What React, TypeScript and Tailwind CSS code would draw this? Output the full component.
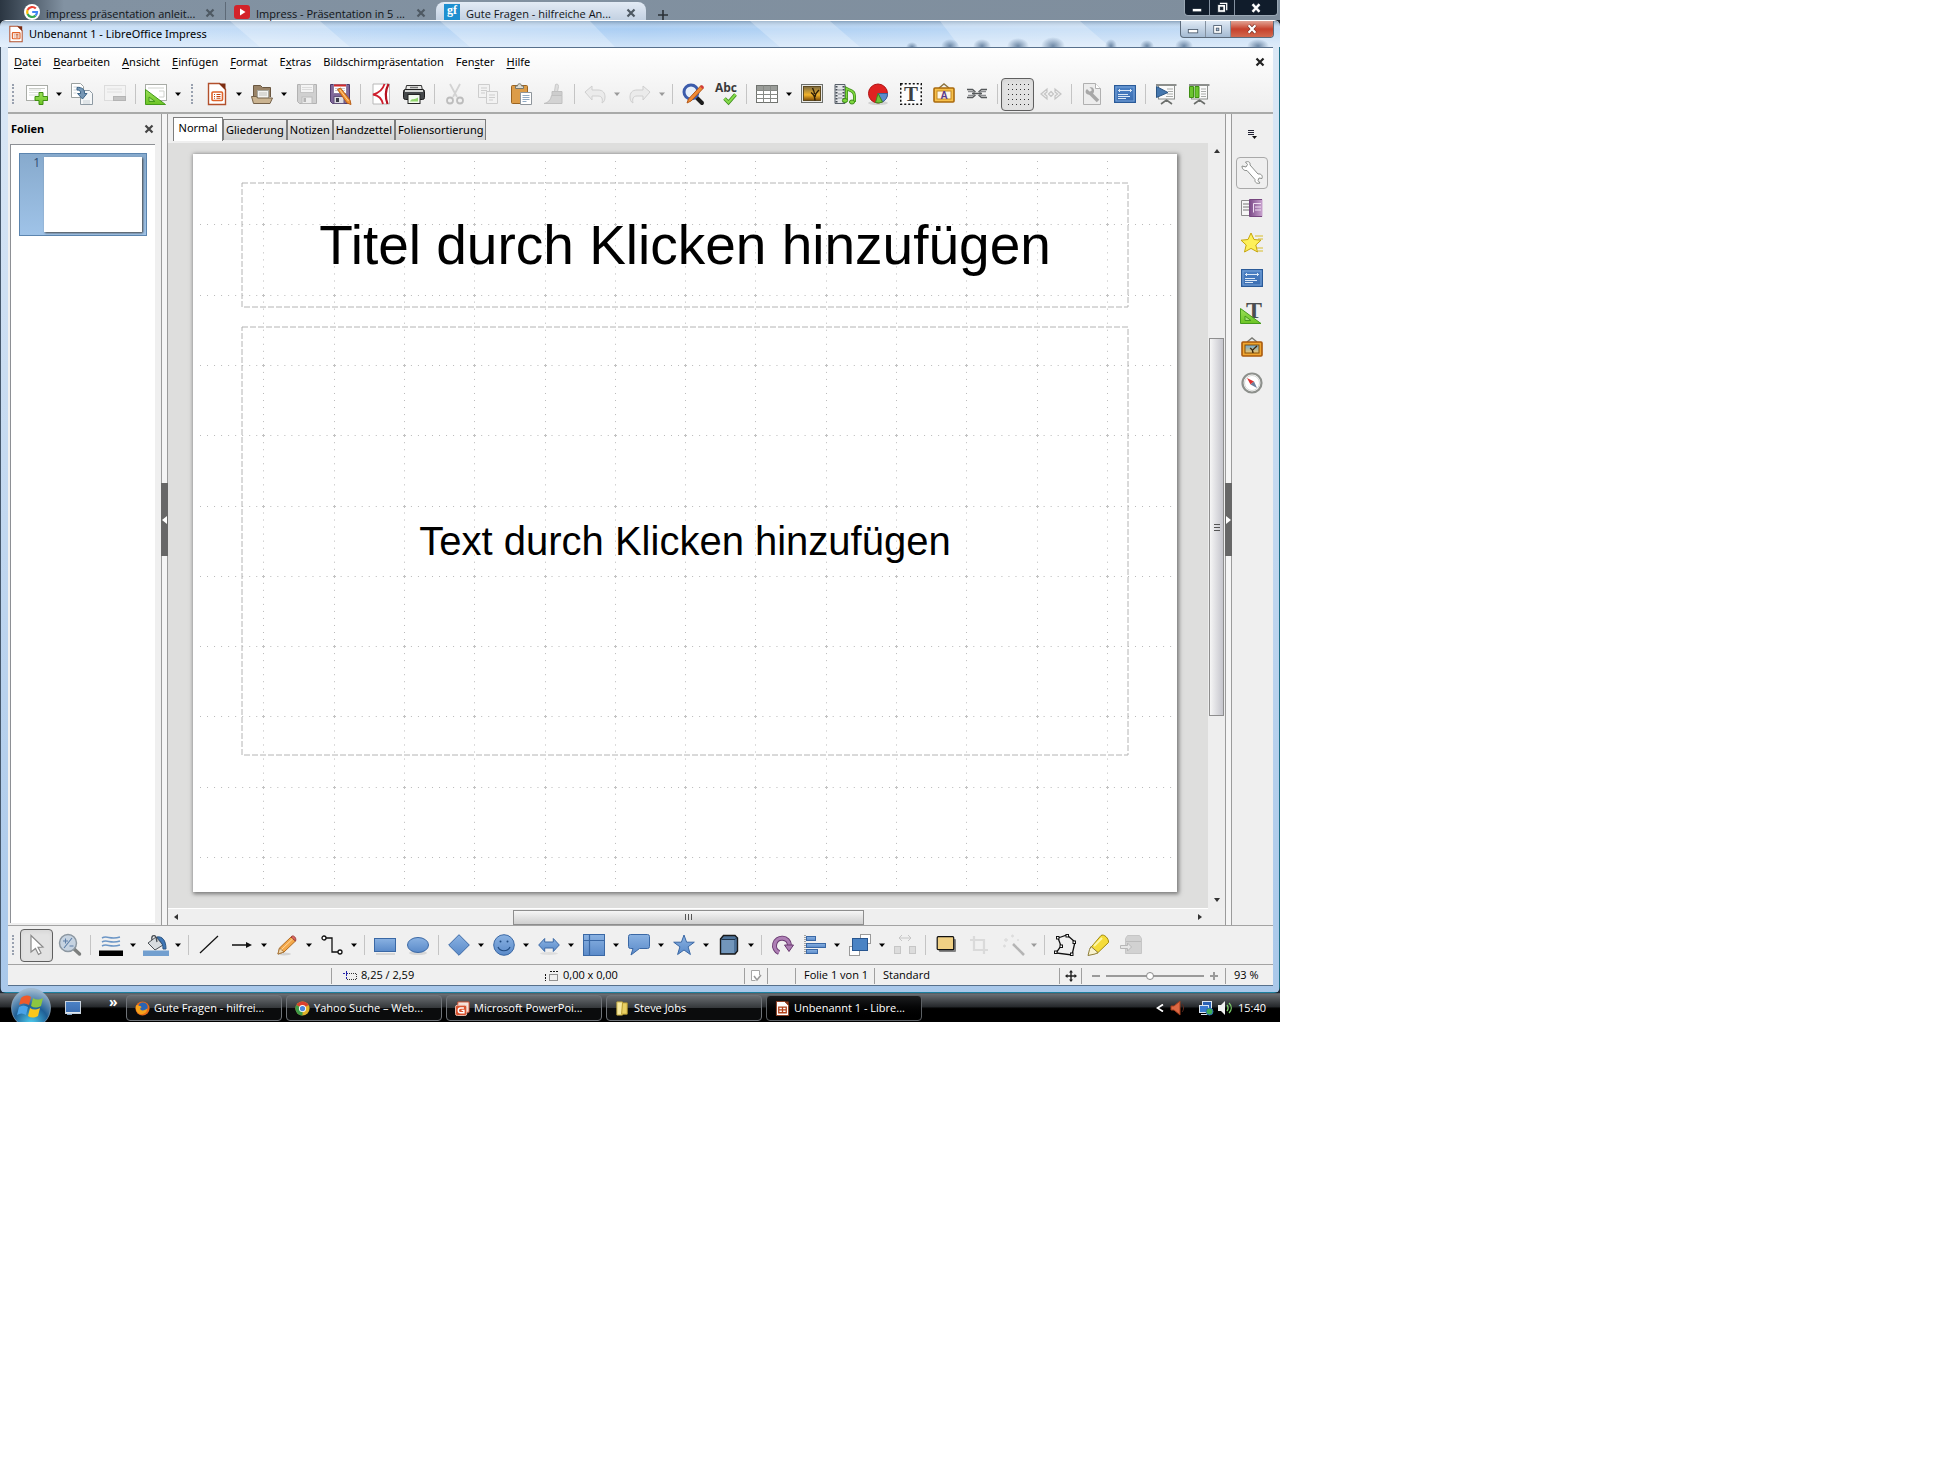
import type { ReactNode } from 'react';
import { clsx } from 'clsx';

interface ToolItem {
  icon: string;
  label: string;
  drop?: boolean;
  pressed?: boolean;
  disabled?: boolean;
}

type ToolEntry = ToolItem | 'sep' | 'grip';

const BLUE = 'url(#g-blue)';
const EDGE = '#3a68a5';

const docLines = (
  <path d="M3 7h12M3 9.500h12M3 12h9" stroke="#d8dcd6" strokeWidth="1" />
);

const icons: Record<string, ReactNode> = {
  newSlide: (
    <>
      <rect x="0.500" y="2.500" width="21" height="15" fill="#fff" stroke="#a9aca7" />
      {docLines}
      <path d="M3 5.500h16" stroke="#c9ccc7" />
      <path d="M13 9.500h4v4h4.500v4H17v4h-4v-4H9v-4h4z" fill="url(#g-green)" stroke="#3f8f12" />
    </>
  ),
  duplicate: (
    <>
      <path d="M0.500 0.500h9l3 3v11h-12z" fill="#fff" stroke="#9ba1a0" />
      <path d="M2.500 4h6M2.500 7h4M2.500 10h3" stroke="#c9d1d6" />
      <path d="M9.500 7.500h9l3 3v11h-12z" fill="#f5f7f8" stroke="#8e9aa3" />
      <path d="M12 18h7M12 20h7" stroke="#c9d1d6" />
      <path d="M6 4.500c5-.5 8 2 7.500 6h2.500L11.500 16 6.500 10.500h3c.5-2.500-1-3.500-3.500-3.500z" fill="#7697b5" stroke="#3e6688" />
    </>
  ),
  deleteSlide: (
    <>
      <rect x="0.500" y="2.500" width="21" height="15" fill="#f3f3f3" stroke="#dcdcdc" />
      <path d="M3 6h15M3 9h15" stroke="#e0e0e0" />
      <rect x="9.500" y="13.500" width="12" height="4" fill="#c4c4c4" stroke="#b4b4b4" />
    </>
  ),
  template: (
    <>
      <rect x="0.500" y="1.500" width="21" height="16" fill="#fff" stroke="#a9aca7" />
      <path d="M3 5h16M14 8h5v6h-5" stroke="#d0d3ce" fill="none" />
      <path d="M0.500 6.500v15h20z" fill="url(#g-green)" stroke="#459a1c" />
      <path d="M4 14v4.500h6z" fill="#a9e07c" stroke="#459a1c" />
    </>
  ),
  impress: (
    <>
      <path d="M2.500 0.500h11l6 6v15h-17z" fill="#fff" stroke="#b2502c" strokeWidth="1.400" />
      <path d="M13 0.500h6.500V7z" fill="#7c2d12" />
      <rect x="6" y="9" width="10.500" height="8.500" rx="1" fill="#fff" stroke="#e0632a" strokeWidth="1.600" />
      <path d="M8 11.500h1M10.500 11.500h4M8 13.500h1M10.500 13.500h4M8 15.300h1M10.500 15.300h4" stroke="#c1440e" strokeWidth="1.100" />
    </>
  ),
  open: (
    <>
      <path d="M2.500 19V2.500h7l2 2h8V14" fill="#9a8468" stroke="#6a5740" />
      <rect x="6.500" y="7.500" width="11" height="8" fill="#f4f4f2" stroke="#a8a8a0" />
      <path d="M8 10h8M8 12h8" stroke="#c0c0bb" />
      <path d="M0.500 13.500h5l1 1.500h15l-2.500 5.500H2.500z" fill="#cbb491" stroke="#75624a" />
    </>
  ),
  save: (
    <>
      <path d="M1.500 1.500h19v19h-17l-2-2z" fill="#d0d0d0" stroke="#b2b2b2" />
      <rect x="4.500" y="1.500" width="13" height="8" fill="#f4f4f4" stroke="#c4c4c4" />
      <path d="M6 4.500h10M6 6.500h10" stroke="#dcdcdc" />
      <rect x="6" y="14" width="10" height="6.500" fill="#ededed" stroke="#bcbcbc" />
      <rect x="7.500" y="15" width="2.500" height="4" fill="#b4b4b4" />
    </>
  ),
  saveAs: (
    <>
      <path d="M1.500 1.500h19v19h-17l-2-2z" fill="#80689a" stroke="#503a6b" />
      <rect x="4.500" y="1.500" width="13" height="9" fill="#fff" stroke="#8b7aa0" />
      <path d="M5 2.500h12" stroke="#d42c2c" strokeWidth="2" />
      <path d="M6 5.500h10M6 7.500h10" stroke="#c8c8d0" />
      <rect x="5" y="13.500" width="10" height="7" fill="#dcdce2" stroke="#64527b" />
      <rect x="7" y="15" width="3" height="4" fill="#3e3e4a" />
      <path d="M8.500 6.500l3-1.500 9.500 12 1 4.500-4-1.500z" fill="#f29433" stroke="#b9601a" />
      <path d="M11 7l8.500 11" stroke="#ffd090" />
    </>
  ),
  pdf: (
    <>
      <path d="M3 1h16.500v20H3z" fill="#fff" stroke="#b8b8b8" />
      <path d="M14.500 1C13 6 9 10 3 11.500c6 1 9 5 10 9.500" fill="none" stroke="#cf1f2e" strokeWidth="1.800" />
      <path d="M18.500 1c-3.500 7-3.500 13-1 20" fill="none" stroke="#b7121f" strokeWidth="2.200" />
    </>
  ),
  print: (
    <>
      <path d="M3.500 2.500h15l1 5h-17z" fill="#e8e8e6" stroke="#333" />
      <path d="M7 4.500h8" stroke="#777" strokeWidth="1.500" />
      <rect x="0.500" y="6.500" width="21" height="10" rx="2" fill="#45484a" stroke="#1b1b1b" />
      <path d="M2 8h18" stroke="#d5d7d4" strokeWidth="2" />
      <rect x="5" y="11.500" width="12" height="9" fill="#f4fbf0" stroke="#222" />
      <path d="M7 18.500c2-4 4-1 8-4v4z" fill="#8fd66a" />
    </>
  ),
  cut: (
    <g stroke="#bdbdbd" fill="none">
      <path d="M6 1l7 13M16 1L9 14" strokeWidth="1.800" stroke="#d3d3d3" />
      <circle cx="6" cy="17.500" r="3" strokeWidth="1.800" />
      <circle cx="16" cy="17.500" r="3" strokeWidth="1.800" />
    </g>
  ),
  copy: (
    <g fill="#f2f2f2" stroke="#cdcdcd">
      <path d="M1.500 1.500h11v13h-11z" />
      <path d="M9.500 8.500h11v12h-11z" />
      <path d="M4 5h6M4 7.500h6M4 10h4M12 12h6M12 14.500h6M12 17h4" />
    </g>
  ),
  paste: (
    <>
      <rect x="1.500" y="2.500" width="16" height="18" rx="1" fill="#dc9c48" stroke="#9b6420" />
      <path d="M5.500 5.500V3h2c0-3 4-3 4 0h2v2.500z" fill="#dcdcd4" stroke="#77776c" />
      <path d="M10.500 9.500h11v12h-11z" fill="#fff" stroke="#8e959b" />
      <path d="M12.500 12.500h7M12.500 14.500h7M12.500 16.500h7M12.500 18.500h4" stroke="#8fa9c4" />
    </>
  ),
  brush: (
    <>
      <path d="M12.500 1.500c2-1 3 0 3 2l-1 5h-3z" fill="#dedede" stroke="#c9c9c9" />
      <path d="M9 8.500h10v4H9z" fill="#cdcdcd" stroke="#c0c0c0" />
      <path d="M8.500 12.500h10.500v8H1c4-1 6.500-3 7.500-8z" fill="#d3d3d3" stroke="#c0c0c0" />
    </>
  ),
  undo: (
    <path d="M1 8l7-6v4h6c5 0 7 3 7 7 0 3-1 5-3 6 1-4 0-7-4-7H8v4z" transform="translate(0 1)" fill="#ebebeb" stroke="#cfcfcf" />
  ),
  redo: (
    <path d="M21 8l-7-6v4H8c-5 0-7 3-7 7 0 3 1 5 3 6-1-4 0-7 4-7h6v4z" transform="translate(0 1)" fill="#ebebeb" stroke="#cfcfcf" />
  ),
  find: (
    <>
      <path d="M13 13l7 7" stroke="#1d1d1d" strokeWidth="4" strokeLinecap="round" />
      <circle cx="9" cy="9" r="7" fill="#e6effa" stroke="#3c5cab" strokeWidth="3" />
      <path d="M19 2.500l2.500 2.500L9 18l-4 2 1.500-4z" fill="#f08a34" stroke="#b3591a" />
      <path d="M18 3.500l2.500 2.500 1.500-2-2-2z" fill="#d43c3c" />
    </>
  ),
  spell: (
    <>
      <text x="11" y="9" textAnchor="middle" fontFamily="Open Sans, sans-serif" fontWeight="700" fontSize="12" fill="#3a3a3a">
        Abc
      </text>
      <path d="M9.500 15.500l4 4 7-8" fill="none" stroke="#3f8f1c" strokeWidth="3.600" />
      <path d="M9.500 15.500l4 4 7-8" fill="none" stroke="#86db4c" strokeWidth="2" />
    </>
  ),
  table: (
    <>
      <rect x="0.500" y="2.500" width="21" height="17" fill="#fff" stroke="#70736f" />
      <path d="M1 3h20v4H1z" fill="#9a9d99" />
      <path d="M0.500 7.500h21M0.500 11.500h21M0.500 15.500h21M7.500 2.500v17M14.500 2.500v17" stroke="#878a86" />
    </>
  ),
  image: (
    <>
      <rect x="0.500" y="1.500" width="21" height="18" fill="#e9e9e7" stroke="#6c6f6b" />
      <rect x="2.500" y="3.500" width="17" height="14" fill="url(#g-sun)" stroke="#5f4a20" />
      <path d="M14 17.500c0-4-1-6-4-8M14 14c0-4 2-5 4-7M13.500 11c0-2-1-4-2-6" fill="none" stroke="#2b1d08" strokeWidth="1.400" />
    </>
  ),
  media: (
    <>
      <path d="M1 1.500h10v19H1z" fill="#e3e5e8" stroke="#59616a" />
      <path d="M2.500 3v17M9.500 3v17" stroke="#444c55" strokeWidth="2" strokeDasharray="1.500 1.500" />
      <path d="M4 7h4M4 11h4M4 15h4" stroke="#8b9097" />
      <path d="M12.500 17V5.500l3 1.500c3 1 5 3 5 6v6" fill="none" stroke="#3d8d17" strokeWidth="3" />
      <path d="M12.500 17V5.500l3 1.500c3 1 5 3 5 6v6" fill="none" stroke="#7ed63f" strokeWidth="1.500" />
      <ellipse cx="11" cy="17.500" rx="2.600" ry="2" fill="#7ed63f" stroke="#3d8d17" />
      <ellipse cx="18" cy="19" rx="2.600" ry="2" fill="#7ed63f" stroke="#3d8d17" />
    </>
  ),
  chart: (
    <>
      <ellipse cx="11" cy="20" rx="10" ry="2" fill="#000" opacity="0.120" />
      <circle cx="11" cy="10.500" r="9.500" fill="#e02222" stroke="#b01212" />
      <path d="M11 10.500h9.500a9.500 9.500 0 0 1-5 8.500z" fill="#5b8ccb" stroke="#37629c" />
      <path d="M11 10.500l4.500 8.500a9.500 9.500 0 0 1-7 .500z" fill="#72c23a" stroke="#3f8a1c" />
    </>
  ),
  textbox: (
    <>
      <rect x="0.750" y="0.750" width="20.500" height="20.500" fill="#fdfdfd" stroke="#111" strokeWidth="1.500" strokeDasharray="2 2" />
      <text x="11" y="18" textAnchor="middle" fontFamily="Liberation Serif, serif" fontWeight="700" fontSize="21" fill="#3d3f40">
        T
      </text>
    </>
  ),
  fontwork: (
    <>
      <path d="M6 5l5-4 5 4" fill="none" stroke="#8c7440" strokeWidth="1.400" />
      <rect x="1" y="5" width="20" height="14" rx="1" fill="#f7c04a" stroke="#a9690d" strokeWidth="1.600" />
      <rect x="4" y="8" width="14" height="8" fill="#fdf6e6" stroke="#c48a24" />
      <text x="11" y="15.500" textAnchor="middle" fontFamily="Liberation Sans, sans-serif" fontWeight="700" fontSize="10" fill="#5b3a8a">
        A
      </text>
    </>
  ),
  link: (
    <g fill="none" stroke="#55585a" strokeWidth="1.400">
      <path d="M1 6.500h5.500l3 2.500M21 6.500h-5.500l-3 2.500M1 14.500h5.500l3-2.500M21 14.500h-5.500l-3-2.500" />
      <path d="M2 8.500h4c3 0 3 4 0 4H2M20 8.500h-4c-3 0-3 4 0 4h4" stroke="#8b8d90" />
      <path d="M6 10.500h10" />
    </g>
  ),
  grid: (
    <g fill="#333">
      {[1, 6, 11, 16, 21].map(y =>
        [1, 5, 9, 13, 17, 21].map(x => (
          <rect key={`${x}-${y}`} x={x} y={y} width="1" height="1" />
        ))
      )}
    </g>
  ),
  glue: (
    <g fill="#f0f0f0" stroke="#c4c4c4" strokeWidth="1.200">
      <path d="M1 11l6-5v3l-2.500 2L7 13v3zM21 11l-6-5v3l2.500 2-2.500 2v3z" />
      <path d="M11 8.500L13.500 11 11 13.500 8.500 11z" />
    </g>
  ),
  docWrench: (
    <>
      <path d="M2.500 0.500h12l5 5v16h-17z" fill="#ededed" stroke="#b0b0b0" />
      <path d="M14.500 0.500v5h5" fill="#fff" stroke="#b0b0b0" />
      <path d="M9 10l8 8" stroke="#a8a8a8" strokeWidth="3.500" />
      <path d="M6 6l2.500 2.500L10.500 8V6l-2-1.500c3-1 5 1 4.500 4s-3 4-6 3-3-4-1-5.500z" fill="#a8a8a8" />
    </>
  ),
  form: (
    <>
      <rect x="0.500" y="2.500" width="21" height="17" fill="url(#g-form)" stroke="#2a5a98" />
      <rect x="2" y="4" width="18" height="14" fill="none" stroke="#78a4d8" />
      <path d="M4 7.500h14M5.500 6v3M16.500 6v3M4 11.500h10M4 13.500h12M4 15.500h8" stroke="#dbe8f6" />
    </>
  ),
  showPlay: (
    <>
      <path d="M1 2h20.500M11.500 17v2M6 21l5.500-4 5.500 4" fill="none" stroke="#6b6e6b" strokeWidth="1.600" />
      <rect x="3.500" y="2.500" width="16" height="13.500" fill="#fafafa" stroke="#8c8f8c" />
      <path d="M12 6h6M13 8.500h5M12 11h6M11 13.500h7" stroke="#a9aca9" />
      <path d="M1.500 3.500L13 9.500 1.500 14.500z" fill="#4577ae" stroke="#2b5583" />
    </>
  ),
  showGreen: (
    <>
      <path d="M1 2h20.500M11.500 17v2M6 21l5.500-4 5.500 4" fill="none" stroke="#6b6e6b" strokeWidth="1.600" />
      <rect x="3.500" y="2.500" width="16" height="13.500" fill="#fafafa" stroke="#8c8f8c" />
      <path d="M13 6h5M13 8.500h5M13 11h5M13 13.500h5" stroke="#a9aca9" />
      <path d="M1.500 3.500h4v11h-4zM7 3.500h4v11H7z" fill="#6bc42e" stroke="#3f8f12" />
    </>
  ),
  pointer: (
    <path d="M5 1.500l12 11.500-5 .3 3 5.700-2.500 1.500-3-6-4.500 3.500z" fill="#fff" stroke="#8a8a8a" strokeWidth="1.200" />
  ),
  zoom: (
    <>
      <path d="M14 14l6.500 6" stroke="#7d7f7e" strokeWidth="3.500" strokeLinecap="round" />
      <circle cx="9" cy="9" r="8.500" fill="#c6d3e1" stroke="#8c97a1" strokeWidth="1.500" />
      <path d="M4 7h5M6.500 4.500v5M5 14L13 4M10.500 12h4" stroke="#5d7fa8" strokeWidth="1.100" />
    </>
  ),
  lineColor: (
    <>
      <path d="M2 4c5-3 8 2 18-1M2 8c5-3 8 2 18-1M2 12c5-3 8 2 18-1" fill="none" stroke="#6c96c6" strokeWidth="1.500" />
      <rect x="-1" y="16.500" width="24" height="5.500" fill="#000" />
    </>
  ),
  fillColor: (
    <>
      <path d="M3 9l8-6 7 8-8 5z" fill="#d8dcdf" stroke="#4a4f54" />
      <path d="M7 6c-1-4 2-6 4-3l1 5" fill="none" stroke="#4a4f54" strokeWidth="1.300" />
      <path d="M12 3c5-1 9 3 9 12h-3c0-4-1-6-3-8z" fill="#3f76b5" stroke="#2b5583" />
      <rect x="-2" y="16.500" width="26" height="5.500" fill="#729fcf" />
    </>
  ),
  line: <path d="M2 19L20 2" stroke="#111" strokeWidth="1.200" />,
  arrowLine: (
    <>
      <path d="M1 11h16" stroke="#111" strokeWidth="1.400" />
      <path d="M15 8l6 3-6 3z" fill="#111" />
    </>
  ),
  pencil: (
    <>
      <ellipse cx="8" cy="20" rx="7" ry="1.500" fill="#000" opacity="0.120" />
      <path d="M15 3l4.500 4L8 18l-6 2 1.500-6z" fill="#f4a84a" stroke="#b06a20" />
      <path d="M3.500 14l4.500 4-6 2z" fill="#f3dbb4" stroke="#a97a40" />
      <path d="M15 3c2-3 6 1 4.500 4z" fill="#dd6a62" stroke="#9c3b36" />
      <path d="M16.500 5L5.500 15.500" stroke="#ffd9a0" />
    </>
  ),
  connector: (
    <g fill="#fff" stroke="#111" strokeWidth="1.300">
      <path d="M5 4h6v14h6" fill="none" />
      <circle cx="3" cy="4" r="2" />
      <circle cx="19" cy="18" r="2" />
    </g>
  ),
  rect: (
    <>
      <path d="M2 19h19v2H2z" fill="#000" opacity="0.100" />
      <rect x="0.500" y="4.500" width="21" height="13" fill={BLUE} stroke={EDGE} />
    </>
  ),
  ellipse: (
    <>
      <ellipse cx="11" cy="19" rx="9" ry="2" fill="#000" opacity="0.100" />
      <ellipse cx="11" cy="11" rx="10.500" ry="7.500" fill={BLUE} stroke={EDGE} />
    </>
  ),
  diamond: <path d="M11 0.700L21.300 11 11 21.300 0.700 11z" fill={BLUE} stroke={EDGE} />,
  smiley: (
    <>
      <circle cx="11" cy="11" r="10.300" fill={BLUE} stroke={EDGE} />
      <circle cx="7.500" cy="7.500" r="1" fill="#1f4a80" />
      <circle cx="14.500" cy="7.500" r="1" fill="#1f4a80" />
      <path d="M5 13c2 5 10 5 12 0" fill="none" stroke="#1f4a80" strokeWidth="1.200" />
    </>
  ),
  doubleArrow: (
    <>
      <ellipse cx="11" cy="19.500" rx="9" ry="1.500" fill="#000" opacity="0.080" />
      <path d="M0.700 11l6-6.500V8h8.600V4.500l6 6.500-6 6.500V14H6.700v3.500z" fill={BLUE} stroke={EDGE} />
    </>
  ),
  flowchart: (
    <>
      <rect x="0.500" y="0.500" width="21" height="21" fill={BLUE} stroke={EDGE} />
      <path d="M6.500 0.500v21M0.500 6.500h21" stroke={EDGE} strokeWidth="1.200" />
    </>
  ),
  callout: (
    <path d="M2.500 0.500h17q2 0 2 2v10q0 2-2 2h-8L3 21l2-6.500H2.500q-2 0-2-2v-10q0-2 2-2z" fill={BLUE} stroke={EDGE} />
  ),
  star: (
    <path d="M11 1l2.600 7.200h7.700l-6.200 4.600 2.300 7.700L11 16l-6.400 4.500 2.300-7.700L0.700 8.200h7.700z" fill={BLUE} stroke={EDGE} />
  ),
  cube: (
    <>
      <path d="M2.500 5l3-3.500H17L19.500 4v13L17 20H2.500z" fill="#4d7299" stroke="#1a1a1a" strokeWidth="1.400" />
      <rect x="3.500" y="6" width="12.500" height="13" fill="#7296bb" />
      <path d="M3.500 5.500H17l2.500-2.500" stroke="#20354d" fill="none" />
    </>
  ),
  rotate: (
    <>
      <path d="M8 18.500a7.500 7.500 0 1 1 10.500-7.500" fill="none" stroke="#68386f" strokeWidth="5" />
      <path d="M8 18.500a7.500 7.500 0 1 1 10.500-7.500" fill="none" stroke="#ad7fb4" strokeWidth="3.200" />
      <path d="M13.500 11h9l-4.500 6.500z" fill="#ad7fb4" stroke="#68386f" />
    </>
  ),
  align: (
    <g fill={BLUE} stroke={EDGE}>
      <path d="M1 1v19" stroke="#555" strokeDasharray="1 1" />
      <rect x="2.500" y="2.500" width="9" height="4" />
      <rect x="2.500" y="9.500" width="19" height="4" />
      <rect x="2.500" y="15.500" width="11" height="4" />
    </g>
  ),
  arrange: (
    <>
      <rect x="11.500" y="0.500" width="10" height="9" fill="#fff" stroke="#9a9a9a" />
      <rect x="0.500" y="12.500" width="10" height="9" fill="#fff" stroke="#9a9a9a" />
      <rect x="3.500" y="4.500" width="15" height="12" fill="#4a83c4" stroke="#27558f" />
    </>
  ),
  distribute: (
    <g fill="#dcdcdc" stroke="#c6c6c6">
      <path d="M5 4h12M5 4l3-3M5 4l3 3M17 4l-3-3M17 4l-3 3" fill="none" />
      <rect x="0.500" y="12.500" width="6" height="7" />
      <rect x="15.500" y="12.500" width="6" height="7" />
    </g>
  ),
  shadow: (
    <>
      <rect x="4" y="5" width="17" height="13" rx="1" fill="#555" opacity="0.700" />
      <rect x="2.200" y="2.700" width="16.500" height="13" rx="1" fill="#f0d084" stroke="#111" strokeWidth="1.200" />
    </>
  ),
  crop: (
    <g fill="none" stroke="#dadada" strokeWidth="2.200">
      <path d="M6 2v14h14M2 6h14v14" />
    </g>
  ),
  wand: (
    <>
      <path d="M12 10l11 11" stroke="#b5b5b5" strokeWidth="2.500" />
      <path d="M3 6h4M5 4v4M10 2h3M11.500 0.500v3M2 12h3M16 6h2M3.500 10.500v3" stroke="#dcdcdc" strokeWidth="1.300" />
    </>
  ),
  points: (
    <>
      <path d="M4 4l9-3 8 7-3 13-16-2 5-7z" fill="none" stroke="#111" strokeWidth="1.300" />
      <g fill="#fff" stroke="#111">
        <rect x="2.500" y="2.500" width="2.500" height="2.500" />
        <rect x="12" y="0.500" width="2.500" height="2.500" />
        <rect x="19" y="7" width="2.500" height="2.500" />
        <rect x="16.500" y="19" width="2.500" height="2.500" />
        <rect x="0.500" y="17" width="2.500" height="2.500" />
        <rect x="6" y="11" width="2.500" height="2.500" />
      </g>
    </>
  ),
  gluePoint: (
    <>
      <path d="M14 1.500c3-2 8 3 7.500 7L10 19.500l-7-5z" fill="#f5dc3a" stroke="#a08a10" />
      <path d="M4 12.500l7 6-3 1.500-7 1.500 1.500-6z" fill="#f8f2cf" stroke="#8d7d3a" />
      <path d="M15 4l-8 8" stroke="#fdf6a8" strokeWidth="2" />
    </>
  ),
  exitShape: (
    <>
      <path d="M5.500 4.500l2-3h12l2 3v15h-16z" fill="#d2d2d2" stroke="#c6c6c6" />
      <path d="M6 7.500h15" stroke="#bcbcbc" />
      <path d="M0.500 11.500h7V9l4 4-4 4v-2.500h-7z" fill="#e6e6e6" stroke="#b8b8b8" />
    </>
  ),
  sideMenu: (
    <>
      <path d="M7 7.500h6M7 9.500h6M7 11.500h6" stroke="#223" />
      <path d="M11 13h5l-2.500 3z" fill="#111" />
    </>
  ),
  wrench: (
    <path
      d="M1 4.500c0 3 2 5 5 4.500l8 9c-.5 3 2 4.500 5 3.500l-2-2.500 1-2.500 3 .500c1-3-1-5-4-4.500l-8-9c.5-3-1.500-4-4.500-3l2 2.500-1.500 2.500z"
      transform="translate(0 -0.500)"
      fill="#fff"
      stroke="#8b8e8b"
    />
  ),
  transition: (
    <>
      <path d="M0.500 3.500h9v15h-9z" fill="#f6f6f6" stroke="#8c8c8c" />
      <path d="M2 7h6M2 10h6M2 13h6" stroke="#777" />
      <path d="M8.500 2.500h13v17h-13z" fill="url(#g-purple)" />
      <path d="M21 2.500H8.500v17H21" fill="none" stroke="#76467f" />
      <path d="M12.500 15.500v-9H20M14 10h6M14 13h6" fill="none" stroke="#f0e0f3" />
    </>
  ),
  animation: (
    <>
      <path d="M14 4h8M17 7h5M16 16h6M17 19h5" stroke="#d8bd2c" strokeWidth="1.200" />
      <path d="M10 1l3 6.500 7 .7-5.200 4.800L16.500 20 10 16.400 3.500 20l1.700-7L0 8.200l7-.7z" fill="#fdf05a" stroke="#c6a50c" />
    </>
  ),
  styles: (
    <>
      <text x="13" y="16" textAnchor="middle" fontFamily="Liberation Serif, serif" fontWeight="700" fontSize="24" fill="#4b4e50">
        T
      </text>
      <path d="M-0.500 6.500v15h20.500z" fill="url(#g-green)" stroke="#459a1c" />
      <path d="M4 14v4.500h6z" fill="#a9e07c" stroke="#459a1c" />
    </>
  ),
  gallery: (
    <>
      <path d="M6 5l5-4 5 4" fill="none" stroke="#7a7a74" strokeWidth="1.400" />
      <rect x="1" y="5" width="20" height="14" rx="1" fill="#f0a631" stroke="#a9590d" strokeWidth="1.600" />
      <rect x="4" y="8" width="14" height="8" fill="url(#g-sky)" stroke="#80500f" />
      <path d="M12 16c0-3-1-4-3-5M12 13c1-2 3-3 4-4" fill="none" stroke="#3b2508" strokeWidth="1.300" />
    </>
  ),
  navigator: (
    <>
      <circle cx="11" cy="11" r="9.500" fill="#fff" stroke="#8d908c" strokeWidth="2.200" />
      <circle cx="11" cy="11" r="7.500" fill="none" stroke="#d6d8d5" />
      <path d="M6 6l7 3.500-3.500 3z" fill="#dc3232" />
      <path d="M16 16l-3-6.500-3.500 3z" fill="#6c7f9c" />
    </>
  ),
};

const standardBar: ToolEntry[] = [
  { icon: 'newSlide', label: 'Neue Folie', drop: true },
  { icon: 'duplicate', label: 'Folie duplizieren' },
  { icon: 'deleteSlide', label: 'Folie löschen', disabled: true },
  'sep',
  { icon: 'template', label: 'Folienlayout', drop: true },
  'grip',
  { icon: 'impress', label: 'Neu', drop: true },
  { icon: 'open', label: 'Öffnen', drop: true },
  { icon: 'save', label: 'Speichern', disabled: true },
  { icon: 'saveAs', label: 'Speichern unter' },
  'sep',
  { icon: 'pdf', label: 'Als PDF exportieren' },
  { icon: 'print', label: 'Drucken' },
  'sep',
  { icon: 'cut', label: 'Ausschneiden', disabled: true },
  { icon: 'copy', label: 'Kopieren', disabled: true },
  { icon: 'paste', label: 'Einfügen' },
  { icon: 'brush', label: 'Format übertragen', disabled: true },
  'sep',
  { icon: 'undo', label: 'Rückgängig', drop: true, disabled: true },
  { icon: 'redo', label: 'Wiederherstellen', drop: true, disabled: true },
  'sep',
  { icon: 'find', label: 'Suchen und Ersetzen' },
  { icon: 'spell', label: 'Rechtschreibung' },
  'sep',
  { icon: 'table', label: 'Tabelle', drop: true },
  { icon: 'image', label: 'Bild' },
  { icon: 'media', label: 'Audio oder Video' },
  { icon: 'chart', label: 'Diagramm' },
  { icon: 'textbox', label: 'Textfeld' },
  { icon: 'fontwork', label: 'Fontwork' },
  { icon: 'link', label: 'Hyperlink' },
  'sep',
  { icon: 'grid', label: 'Raster anzeigen', pressed: true },
  { icon: 'glue', label: 'Fanglinien', disabled: true },
  'sep',
  { icon: 'docWrench', label: 'Master', disabled: true },
  { icon: 'form', label: 'Formular' },
  'sep',
  { icon: 'showPlay', label: 'Ab erster Folie' },
  { icon: 'showGreen', label: 'Ab aktueller Folie' },
];

const drawingBar: ToolEntry[] = [
  { icon: 'pointer', label: 'Auswahl', pressed: true },
  { icon: 'zoom', label: 'Maßstab' },
  'sep',
  { icon: 'lineColor', label: 'Linienfarbe', drop: true },
  { icon: 'fillColor', label: 'Füllfarbe', drop: true },
  'sep',
  { icon: 'line', label: 'Linie' },
  { icon: 'arrowLine', label: 'Pfeil', drop: true },
  { icon: 'pencil', label: 'Kurve', drop: true },
  { icon: 'connector', label: 'Verbinder', drop: true },
  'sep',
  { icon: 'rect', label: 'Rechteck' },
  { icon: 'ellipse', label: 'Ellipse' },
  'sep',
  { icon: 'diamond', label: 'Standardformen', drop: true },
  { icon: 'smiley', label: 'Symbolformen', drop: true },
  { icon: 'doubleArrow', label: 'Blockpfeile', drop: true },
  { icon: 'flowchart', label: 'Flussdiagramme', drop: true },
  { icon: 'callout', label: 'Legenden', drop: true },
  { icon: 'star', label: 'Sterne', drop: true },
  { icon: 'cube', label: '3D-Objekte', drop: true },
  'sep',
  { icon: 'rotate', label: 'Drehen' },
  { icon: 'align', label: 'Ausrichten', drop: true },
  { icon: 'arrange', label: 'Anordnen', drop: true },
  { icon: 'distribute', label: 'Verteilen', disabled: true },
  'sep',
  { icon: 'shadow', label: 'Schatten' },
  { icon: 'crop', label: 'Zuschneiden', disabled: true },
  { icon: 'wand', label: 'Filter', drop: true, disabled: true },
  'sep',
  { icon: 'points', label: 'Punkte bearbeiten' },
  { icon: 'gluePoint', label: 'Klebepunkte' },
  { icon: 'exitShape', label: 'Extrusion', disabled: true },
];

const sidebar: ToolItem[] = [
  { icon: 'wrench', label: 'Eigenschaften', pressed: true },
  { icon: 'transition', label: 'Folienübergang' },
  { icon: 'animation', label: 'Animation' },
  { icon: 'form', label: 'Masterfolien' },
  { icon: 'styles', label: 'Formatvorlagen' },
  { icon: 'gallery', label: 'Gallery' },
  { icon: 'navigator', label: 'Navigator' },
];

// [before, access key, after]
const menus = [
  ['', 'D', 'atei'],
  ['', 'B', 'earbeiten'],
  ['', 'A', 'nsicht'],
  ['', 'E', 'infügen'],
  ['', 'F', 'ormat'],
  ['E', 'x', 'tras'],
  ['Bildschirm', 'p', 'räsentation'],
  ['Fen', 's', 'ter'],
  ['', 'H', 'ilfe'],
];

const viewTabs = ['Normal', 'Gliederung', 'Notizen', 'Handzettel', 'Foliensortierung'];

const Glyph = ({ name, className = 'size-[22px]' }: { name: string; className?: string }) => (
  <svg viewBox="0 0 22 22" className={clsx('shrink-0 overflow-visible', className)} aria-hidden="true">
    {icons[name]}
  </svg>
);

const Caret = ({ muted }: { muted?: boolean }) => (
  <svg viewBox="0 0 6 4" className="h-1 w-1.5" aria-hidden="true">
    <path d="M0 0.500h6L3 4z" fill={muted ? '#9a9a9a' : '#000'} />
  </svg>
);

const Cross = ({ className }: { className?: string }) => (
  <svg viewBox="0 0 10 10" className={clsx('size-[10px]', className)} aria-hidden="true">
    <path d="M1.500 1.500l7 7M8.500 1.500l-7 7" stroke="currentColor" strokeWidth="2.200" />
  </svg>
);

const Toolbar = ({ items, label }: { items: ToolEntry[]; label: string }) => (
  <div role="toolbar" aria-label={label} className="flex items-center">
    <span className="ml-1 mr-[6px] h-5 w-px border-l-2 border-dotted border-gray-400" />
    {items.map((item, i) => {
      if (item === 'sep') {
        return (
          <span key={i} className="flex w-2 shrink-0 justify-center">
            <span className="h-5 w-px bg-[#c4c4c4]" />
          </span>
        );
      }
      if (item === 'grip') {
        return (
          <span key={i} className="flex w-4 shrink-0 justify-center">
            <span className="h-5 border-l-2 border-dotted border-gray-400" />
          </span>
        );
      }
      return (
        <span key={i} className="flex shrink-0 items-center">
          <button
            type="button"
            aria-label={item.label}
            disabled={item.disabled}
            className={clsx(
              'flex size-[33px] items-center justify-center rounded-sm',
              item.pressed && 'border border-[#5f5f5f] bg-[#e2e2e2] shadow-inner'
            )}
          >
            <Glyph name={item.icon} />
          </button>
          {item.drop && (
            <button
              type="button"
              aria-label={`${item.label} Optionen`}
              className="flex h-[33px] w-3 items-center justify-center"
            >
              <Caret muted={item.disabled} />
            </button>
          )}
        </span>
      );
    })}
  </div>
);

const browserTabs = [
  { title: 'impress präsentation anleit...', icon: 'google' },
  { title: 'Impress - Präsentation in 5 ...', icon: 'youtube' },
  { title: 'Gute Fragen - hilfreiche An...', icon: 'gf' },
];

const BrowserIcon = ({ name }: { name: string }) => (
  <svg viewBox="0 0 16 16" className="size-4 shrink-0" aria-hidden="true">
    {name === 'google' && (
      <>
        <circle cx="8" cy="8" r="8" fill="#fff" />
        <path d="M11.800 4.600A5 5 0 0 0 3.600 6" fill="none" stroke="#ea4335" strokeWidth="2.200" />
        <path d="M3.600 6a5 5 0 0 0 0 4" fill="none" stroke="#fbbc05" strokeWidth="2.200" />
        <path d="M3.600 10a5 5 0 0 0 8 1.600" fill="none" stroke="#34a853" strokeWidth="2.200" />
        <path d="M11.600 11.600A5 5 0 0 0 13 8H8.200" fill="none" stroke="#4285f4" strokeWidth="2.200" />
      </>
    )}
    {name === 'youtube' && (
      <>
        <rect y="1" width="16" height="14" rx="3" fill="#d3222a" />
        <path d="M6 4.500l5.500 3.500L6 11.500z" fill="#fff" />
      </>
    )}
    {name === 'gf' && (
      <>
        <rect width="16" height="16" fill="#1d8fd0" />
        <text x="8" y="10" textAnchor="middle" fontFamily="Liberation Serif, serif" fontWeight="700" fontSize="12" fill="#fff">
          gf
        </text>
      </>
    )}
  </svg>
);

const BrowserStrip = () => (
  <div className="flex h-5 items-start bg-linear-to-r from-[#2b3642] via-[#8292a2] via-5% to-[#7f8e9d] pl-4">
    {browserTabs.map((tab, i) => (
      <div
        key={tab.title}
        className={clsx(
          'mt-0.5 flex h-[18px] w-[210px] items-end pl-2 pr-2.5 text-[11px] text-[#101418]',
          i === 2 && 'rounded-t-lg bg-linear-to-b from-[#e3ebf5] to-[#c3d1e2]',
          i === 0 && 'border-r border-[#5d6977]'
        )}
      >
        <BrowserIcon name={tab.icon} />
        <span className="ml-1.5 flex-1 whitespace-nowrap leading-3">{tab.title}</span>
        <button type="button" aria-label="Tab schließen" className="mb-0.5 text-[#4e5963]">
          <Cross className="size-2" />
        </button>
      </div>
    ))}
    <button type="button" aria-label="Neuer Tab" className="mt-[10px] ml-3 text-[#2a3036]">
      <svg viewBox="0 0 10 10" className="size-[10px]" aria-hidden="true">
        <path d="M5 0v10M0 5h10" stroke="currentColor" strokeWidth="1.600" />
      </svg>
    </button>
    <div className="ml-auto mr-0.5 flex h-4 overflow-hidden rounded-b border border-t-0 border-[#9aa7b4] bg-[#101c2b] text-white">
      <CaptionButtons />
    </div>
  </div>
);

const CaptionButtons = ({ light }: { light?: boolean }) => {
  const edge = light ? '#4b5a6c' : '#1b2735';
  return (
    <>
      <button type="button" aria-label="Minimieren" className="flex h-full w-[25px] items-center justify-center border-r border-[#8491a0]">
        <svg viewBox="0 0 14 14" className="size-3" aria-hidden="true">
          <rect x="1.500" y="7.500" width="11" height="4" fill="#fff" stroke={edge} />
        </svg>
      </button>
      <button type="button" aria-label="Maximieren" className="flex h-full w-[25px] items-center justify-center border-r border-[#8491a0]">
        <svg viewBox="0 0 14 14" className="size-3" aria-hidden="true">
          {!light && <path d="M4.500 1.500h8v8" fill="none" stroke="#fff" strokeWidth="1.500" />}
          <rect x="2" y="3" width="9" height="9" fill="#fff" stroke={edge} />
          <rect x="5" y="6" width="3" height="3" fill={light ? '#a9c0da' : '#101c2b'} stroke={edge} />
        </svg>
      </button>
      <button
        type="button"
        aria-label="Schließen"
        className={clsx(
          'flex h-full w-[42px] items-center justify-center',
          light && 'bg-linear-to-b from-[#e0a294] via-[#c6402c] to-[#d2694f]'
        )}
      >
        <svg viewBox="0 0 14 14" className="size-3" aria-hidden="true">
          <path d="M3 2.500l8 9M11 2.500l-8 9" stroke={light ? '#6d2a20' : '#4a5563'} strokeWidth="4" />
          <path d="M3 2.500l8 9M11 2.500l-8 9" stroke="#fff" strokeWidth="2.600" />
        </svg>
      </button>
    </>
  );
};

const TitleBar = () => (
  <div className="relative flex h-[26px] items-start bg-linear-to-r from-[#cfe3f8] via-[#a9cdf3] to-[#c4dcf5] pl-2">
    <svg viewBox="0 0 1280 26" preserveAspectRatio="none" className="absolute inset-0 h-full w-full" aria-hidden="true">
      <rect width="1280" height="26" fill="url(#g-glass)" />
      <path d="M230 0h90l30 26h-90zM440 0h150l25 26H470zM750 0h80l30 26h-80zM940 0h140l30 26H960z" fill="#fff" opacity="0.250" />
      <g fill="url(#g-blob)">
        <ellipse cx="912" cy="26" rx="6" ry="5" />
        <ellipse cx="950" cy="25" rx="9" ry="7" />
        <ellipse cx="982" cy="25" rx="9" ry="7" />
        <ellipse cx="1018" cy="25" rx="11" ry="8" />
        <ellipse cx="1053" cy="25" rx="12" ry="9" />
        <ellipse cx="1111" cy="25" rx="6" ry="7" />
        <ellipse cx="1147" cy="25" rx="7" ry="6" />
        <ellipse cx="1184" cy="25" rx="9" ry="7" />
        <ellipse cx="1258" cy="25" rx="11" ry="7" />
      </g>
    </svg>
    <Glyph name="impress" className="relative mt-[5px] size-4" />
    <h1 className="relative ml-[5px] mt-[5px] font-['Noto_Sans',sans-serif] text-[11px] leading-4 text-black">
      Unbenannt 1 - LibreOffice Impress
    </h1>
    <div className="relative ml-auto mr-[6px] flex h-[17px] overflow-hidden rounded-b border border-t-0 border-[#5c6b7c] bg-linear-to-b from-[#dfe9f4] to-[#a5bbd3]">
      <CaptionButtons light />
    </div>
  </div>
);

const SlidePanel = () => (
  <section aria-label="Folien" className="flex w-[153px] shrink-0 flex-col bg-[#efefef]">
    <div className="flex h-[30px] items-center justify-between pl-[3px] pr-[7px]">
      <h2 className="text-[11px] font-bold">Folien</h2>
      <button type="button" aria-label="Folien schließen" className="text-[#444]">
        <Cross />
      </button>
    </div>
    <div className="mb-0.5 ml-0.5 mr-1.5 flex-1 border-l border-t border-[#8d9095] bg-white pl-2 pt-2">
      <button
        type="button"
        className="flex h-[83px] w-32 border border-[#5c85af] bg-linear-to-b from-[#87aacd] to-[#9fc3e8] pr-1 pt-[3px] text-[#2f4d73]"
      >
        <span className="flex-1 pr-1 text-right text-xs leading-3">1</span>
        <span className="h-[75px] w-[98px] bg-white shadow-[1px_1px_2px_#444]" />
      </button>
    </div>
  </section>
);

// thin double rule between panels with a grab handle half-way down
const Splitter = ({ side }: { side: 'left' | 'right' }) => (
  <div className="relative w-[7px] shrink-0 border-x border-[#9b9b9b] bg-[#f5f5f5]">
    <button
      type="button"
      aria-label={side === 'left' ? 'Folienbereich ausblenden' : 'Seitenleiste ausblenden'}
      className="absolute -inset-x-px top-[369px] flex h-[73px] items-center justify-center bg-[#676767]"
    >
      <svg viewBox="0 0 5 8" className="h-2 w-[5px]" aria-hidden="true">
        <path d={side === 'left' ? 'M5 0v8L0 4z' : 'M0 0v8l5-4z'} fill="#fff" />
      </svg>
    </button>
  </div>
);

const Frame = () => (
  <svg className="absolute inset-0 h-full w-full overflow-visible" aria-hidden="true">
    <rect width="100%" height="100%" fill="none" stroke="#b4b4b4" strokeDasharray="6 2" />
  </svg>
);

const STEP = 70.3;

const Slide = () => (
  <div className="relative aspect-[4/3] w-full bg-white shadow-[1px_1px_4px_1px_#777]">
    <svg viewBox="0 0 984 738" className="absolute inset-0 h-full w-full" aria-hidden="true">
      {Array.from({ length: 13 }, (_, i) => (
        <line
          key={`v${i}`}
          x1={Math.round((i + 1) * STEP) + 0.5}
          x2={Math.round((i + 1) * STEP) + 0.5}
          y1="7"
          y2="732"
          stroke="#b9b9b9"
          strokeDasharray="1 6.030"
        />
      ))}
      {Array.from({ length: 10 }, (_, i) => (
        <line
          key={`h${i}`}
          y1={Math.round((i + 1) * STEP) + 0.5}
          y2={Math.round((i + 1) * STEP) + 0.5}
          x1="7"
          x2="980"
          stroke="#b9b9b9"
          strokeDasharray="1 6.030"
        />
      ))}
      {Array.from({ length: 130 }, (_, i) => {
        const x = Math.round(((i % 13) + 1) * STEP);
        const y = Math.round((Math.floor(i / 13) + 1) * STEP);
        return <path key={i} d={`M${x - 1} ${y + 0.5}h3M${x + 0.5} ${y - 1}v3`} stroke="#c2c2c2" />;
      })}
    </svg>
    <div className="relative flex h-full flex-col gap-5 px-[49px] pb-[137px] pt-[29px] font-['Liberation_Sans',sans-serif] text-black">
      <button type="button" className="relative h-[124px] text-[55px] leading-none">
        <Frame />
        Titel durch Klicken hinzufügen
      </button>
      <button type="button" className="relative flex-1 text-[40px] leading-none">
        <Frame />
        Text durch Klicken hinzufügen
      </button>
    </div>
  </div>
);

const ScrollArrow = ({ d, label }: { d: string; label: string }) => (
  <button type="button" aria-label={label} className="flex size-4 shrink-0 items-center justify-center">
    <svg viewBox="0 0 6 6" className="size-1.5" aria-hidden="true">
      <path d={d} fill="#333" />
    </svg>
  </button>
);

const Workspace = () => (
  <main className="flex min-w-0 flex-1 flex-col bg-[#efefef]">
    <div role="tablist" aria-label="Ansicht" className="flex h-[29px] items-start pl-[5px] font-['Noto_Sans',sans-serif]">
      {viewTabs.map((tab, i) => (
        <button
          key={tab}
          type="button"
          role="tab"
          aria-selected={i === 0}
          className={clsx(
            'border border-b-0 border-[#7d7d7d] text-[11px]',
            i === 0
              ? 'mt-[3px] h-6 w-[50px] bg-white pb-0.5'
              : 'mt-[5px] h-[21px] bg-linear-to-b from-[#ededed] to-[#d2d2d2] px-0.5 leading-4'
          )}
        >
          {tab}
        </button>
      ))}
    </div>
    <div className="flex">
      <div className="min-w-0 flex-1 bg-[#dededd] pb-4 pl-[25px] pr-[31px] pt-[11px]">
        <Slide />
      </div>
      <div className="flex w-[17px] flex-col items-center bg-[#eeeeee]">
        <ScrollArrow d="M3 1l3 4H0z" label="Nach oben" />
        <div className="mb-[176px] mt-auto flex h-[378px] w-[15px] flex-col items-center justify-center gap-0.5 border border-[#8e8e8e] bg-linear-to-r from-[#f6f6f6] to-[#c5c5cc]">
          <span className="h-px w-1.5 bg-[#555]" />
          <span className="h-px w-1.5 bg-[#555]" />
          <span className="h-px w-1.5 bg-[#555]" />
        </div>
        <ScrollArrow d="M3 5l3-4H0z" label="Nach unten" />
      </div>
    </div>
    <div className="mr-[17px] flex h-[17px] items-center border-t border-white">
      <ScrollArrow d="M1 3l4-3v6z" label="Nach links" />
      <div className="mx-auto flex h-[15px] w-[351px] items-center justify-center gap-0.5 border border-[#8e8e8e] bg-linear-to-b from-[#f6f6f6] to-[#cfcfcf]">
        <span className="h-1.5 w-px bg-[#555]" />
        <span className="h-1.5 w-px bg-[#555]" />
        <span className="h-1.5 w-px bg-[#555]" />
      </div>
      <ScrollArrow d="M5 3L1 0v6z" label="Nach rechts" />
    </div>
  </main>
);

const Sidebar = () => (
  <aside className="flex w-[41px] shrink-0 flex-col items-center gap-[3px] bg-[#efefef] pr-0.5 pt-1">
    <button type="button" aria-label="Einstellungen" className="mb-1 flex size-8 items-center justify-center">
      <Glyph name="sideMenu" />
    </button>
    {sidebar.map(item => (
      <button
        key={item.label}
        type="button"
        aria-label={item.label}
        className={clsx(
          'flex size-8 items-center justify-center rounded-sm',
          item.pressed && 'border border-[#a9a9a9]'
        )}
      >
        <Glyph name={item.icon} />
      </button>
    ))}
  </aside>
);

const Rule = () => <span className="h-4 w-px shrink-0 bg-[#9f9f9f]" />;

const StatusBar = () => (
  <footer className="flex h-[21px] items-center border-t border-[#a3a3a3] bg-[#f0f0f0] pt-px text-[11px]">
    <span className="w-[323px]" />
    <Rule />
    <span className="flex w-[200px] items-center gap-1 pl-[11px]">
      <svg viewBox="0 0 14 10" className="h-[10px] w-[14px]" aria-hidden="true">
        <path d="M3.500 0v8M0 2.500h6" stroke="#2222aa" strokeDasharray="2 1" />
        <path d="M6 2.500h7.500v6H3.500" fill="none" stroke="#333" strokeDasharray="1 1" />
      </svg>
      8,25 / 2,59
    </span>
    <span className="flex flex-1 items-center gap-1 pl-3">
      <svg viewBox="0 0 15 12" className="h-3 w-[15px]" aria-hidden="true">
        <path d="M1.500 4v7M6 1.500h8" stroke="#111" strokeDasharray="2 1" />
        <rect x="5.500" y="4.500" width="8" height="6" fill="none" stroke="#333" strokeDasharray="1 1" />
      </svg>
      0,00 x 0,00
    </span>
    <Rule />
    <span className="flex w-[22px] justify-center">
      <svg viewBox="0 0 12 12" className="size-3" aria-hidden="true">
        <path d="M9.500 5V0.500h-8v10h4" fill="#fff" stroke="#a5a5a5" />
        <path d="M4 6l3 4 4-5" fill="none" stroke="#9a9a9a" strokeWidth="1.500" />
      </svg>
    </span>
    <Rule />
    <span className="w-[27px]" />
    <Rule />
    <span className="w-[78px] whitespace-nowrap pl-2">Folie 1 von 1</span>
    <Rule />
    <span className="w-[184px] pl-2">Standard</span>
    <Rule />
    <span className="flex w-[21px] justify-center">
      <svg viewBox="0 0 12 12" className="size-3" aria-hidden="true">
        <path d="M6 1v10M1 6h10" stroke="#222" strokeWidth="1.400" />
        <path d="M6 0l2 2.500H4zM6 12l2-2.500H4zM0 6l2.500-2v4zM12 6L9.500 4v4z" fill="#222" />
      </svg>
    </span>
    <Rule />
    <span className="flex w-[143px] items-center gap-1.5 pl-2.5">
      <span className="h-0.5 w-2 bg-[#9a9a9a]" />
      <input
        type="range"
        aria-label="Maßstab"
        min={0}
        max={100}
        defaultValue={44}
        className="h-2.5 w-[98px] appearance-none bg-transparent [&::-webkit-slider-runnable-track]:h-0.5 [&::-webkit-slider-runnable-track]:bg-[#9a9a9a] [&::-webkit-slider-thumb]:-mt-[3px] [&::-webkit-slider-thumb]:size-2 [&::-webkit-slider-thumb]:appearance-none [&::-webkit-slider-thumb]:rounded-full [&::-webkit-slider-thumb]:border [&::-webkit-slider-thumb]:border-[#8a8a8a] [&::-webkit-slider-thumb]:bg-white"
      />
      <svg viewBox="0 0 8 8" className="size-2" aria-hidden="true">
        <path d="M4 0v8M0 4h8" stroke="#9a9a9a" strokeWidth="2" />
      </svg>
    </span>
    <Rule />
    <span className="w-[47px] pl-2">93 %</span>
  </footer>
);

const tasks = [
  { title: 'Gute Fragen - hilfrei...', icon: 'firefox' },
  { title: 'Yahoo Suche – Web...', icon: 'chrome' },
  { title: 'Microsoft PowerPoi...', icon: 'powerpoint' },
  { title: 'Steve Jobs', icon: 'folder' },
  { title: 'Unbenannt 1 - Libre...', icon: 'impress', active: true },
];

const TaskIcon = ({ name }: { name: string }) => (
  <svg viewBox="0 0 16 16" className="size-[15px] shrink-0" aria-hidden="true">
    {name === 'firefox' && (
      <>
        <circle cx="8" cy="8" r="7.500" fill="#e66a17" />
        <circle cx="8.500" cy="6.500" r="5" fill="#2a64b4" />
        <path d="M1 5c1-1 2-1 3 0 2 0 3 1 3 2-2 0-2 3 1 3 2 0 4-1 5-2 0 4-3 6-6 6-4 0-7-4-6-9z" fill="#f6a21b" />
      </>
    )}
    {name === 'chrome' && (
      <>
        <circle cx="8" cy="8" r="7.500" fill="#ddb12b" />
        <path d="M8 8L1.500 4.200A7.500 7.500 0 0 1 14.500 4.200z" fill="#d8402f" />
        <path d="M8 8L1.500 4.200A7.500 7.500 0 0 0 8 15.500z" fill="#3d9a48" />
        <circle cx="8" cy="8" r="3.800" fill="#fff" />
        <circle cx="8" cy="8" r="2.800" fill="#4a86dd" />
      </>
    )}
    {name === 'powerpoint' && (
      <>
        <path d="M3 1h12v11H3z" fill="#f3e4dd" stroke="#c94a2c" />
        <rect x="0.500" y="4.500" width="12" height="11" rx="2" fill="#d9532f" stroke="#f0c4b6" />
        <path d="M9.500 7.500H6a2.500 2.500 0 0 0 0 5h3.500v-2.500H7" fill="none" stroke="#fff" strokeWidth="1.500" />
      </>
    )}
    {name === 'folder' && (
      <>
        <path d="M2 1h6v14H2z" fill="#f7e9a0" stroke="#c2a63c" />
        <path d="M8 2h5v12H7z" fill="#e9cf62" stroke="#b99b30" />
      </>
    )}
    {name === 'impress' && (
      <>
        <path d="M1.500 0.500h9l4 4v11h-13z" fill="#fff" stroke="#8e3a1c" />
        <path d="M10 0.500h4.500V5z" fill="#8e3a1c" />
        <path d="M4 6.500h8v6H4zM4 9.500h8M8 6.500v6" fill="none" stroke="#b5431a" strokeWidth="1.400" />
      </>
    )}
  </svg>
);

const Taskbar = () => (
  <nav
    aria-label="Taskleiste"
    className="relative flex h-[29px] items-center border-t border-[#5b6066] bg-linear-to-b from-[#6a6e73] from-0% via-[#26292c] via-45% to-black to-55% pr-3.5 text-[11px] text-white"
  >
    <button type="button" aria-label="Start" className="ml-[10px] flex w-[42px] justify-center self-end">
      <svg viewBox="0 0 42 34" className="h-[34px] w-[42px]" aria-hidden="true">
        <circle cx="21" cy="20" r="19.500" fill="url(#g-orb)" stroke="#9db4c8" strokeOpacity="0.600" />
        <path d="M11 10c4-3 7-3 10-1l-2 8c-3-2-6-2-10 0z" fill="#ef5a2a" />
        <path d="M23 10c3 2 6 2 10 0l-2 8c-4 2-7 2-10 0z" fill="#8cc63f" />
        <path d="M9 19c3-2 6-2 9 0l-2 8c-3-2-6-2-9 0z" fill="#4aa3e8" />
        <path d="M20 20c3 2 6 2 10 0l-2 8c-4 2-7 2-10 0z" fill="#fbc71b" />
      </svg>
    </button>
    <button type="button" aria-label="Desktop anzeigen" className="ml-[13px]">
      <svg viewBox="0 0 16 14" className="h-[14px] w-4" aria-hidden="true">
        <rect x="0.500" y="0.500" width="15" height="12" fill="url(#g-form)" stroke="#c9d3de" />
        <path d="M1 11.500h14" stroke="#dfe7ef" />
        <path d="M2 13.500h5" stroke="#7fa0c4" />
      </svg>
    </button>
    <button type="button" className="mb-3 ml-7 w-[17px] text-left text-sm leading-4 font-bold">
      »
    </button>
    <div className="flex gap-1">
      {tasks.map(task => (
        <button
          key={task.title}
          type="button"
          className={clsx(
            'flex h-[26px] w-[156px] items-center gap-1 rounded-sm border pl-2 text-left whitespace-nowrap',
            task.active
              ? 'border-[#5c6064] bg-linear-to-b from-[#1c1d1f] to-black'
              : 'border-[#6f7378] bg-linear-to-b from-[#696d71] from-0% via-[#36393c] via-48% to-[#0b0c0d] to-52%'
          )}
        >
          <TaskIcon name={task.icon} />
          <span>{task.title}</span>
        </button>
      ))}
    </div>
    <div className="ml-auto flex items-center gap-1.5">
      <svg viewBox="0 0 8 8" className="size-2" aria-hidden="true">
        <path d="M7 0.500L1.500 4 7 7.500" fill="none" stroke="#fff" strokeWidth="1.800" />
      </svg>
      <svg viewBox="0 0 16 16" className="mr-1.5 size-4" aria-hidden="true">
        <path d="M1 6h3l6-5v14l-6-5H1z" fill="#dd6843" stroke="#a13c1c" />
        <path d="M12 4c2 2 2 6 0 8" fill="none" stroke="#5c2a1e" />
      </svg>
      <svg viewBox="0 0 16 16" className="size-4" aria-hidden="true">
        <rect x="4.500" y="1.500" width="9" height="7" fill="#2b62b4" stroke="#dbe6f2" />
        <rect x="1.500" y="5.500" width="9" height="7" fill="#3a7bd0" stroke="#dbe6f2" />
        <path d="M3 14.500h6" stroke="#dbe6f2" />
        <circle cx="11.500" cy="11.500" r="3.500" fill="#3fae58" stroke="#2c6bb0" />
      </svg>
      <svg viewBox="0 0 14 14" className="-ml-0.5 size-[14px]" aria-hidden="true">
        <path d="M0 4h3l4-4v14l-4-4H0z" fill="#f0f0f0" />
        <path d="M9 4c1.500 2 1.500 4 0 6M11 2c3 3 3 7 0 10" fill="none" stroke="#7fd16a" strokeWidth="1.300" />
      </svg>
      <time>15:40</time>
    </div>
  </nav>
);

const Gradients = () => (
  <svg className="absolute size-0" aria-hidden="true">
    <defs>
      <linearGradient id="g-blue" x1="0" y1="0" x2="0" y2="1">
        <stop offset="0" stopColor="#8ab2e2" />
        <stop offset="1" stopColor="#5a8ac9" />
      </linearGradient>
      <linearGradient id="g-form" x1="0" y1="0" x2="0" y2="1">
        <stop offset="0" stopColor="#4c82c6" />
        <stop offset="1" stopColor="#3a6cb0" />
      </linearGradient>
      <linearGradient id="g-green" x1="0" y1="0" x2="0" y2="1">
        <stop offset="0" stopColor="#9be05a" />
        <stop offset="1" stopColor="#6cc424" />
      </linearGradient>
      <linearGradient id="g-sun" x1="0" y1="0" x2="0" y2="1">
        <stop offset="0" stopColor="#7c6b42" />
        <stop offset="0.600" stopColor="#f2b32c" />
        <stop offset="1" stopColor="#7a4a08" />
      </linearGradient>
      <linearGradient id="g-sky" x1="0" y1="0" x2="0" y2="1">
        <stop offset="0" stopColor="#6aa9d8" />
        <stop offset="1" stopColor="#f1c469" />
      </linearGradient>
      <linearGradient id="g-purple" x1="0" y1="0" x2="1" y2="0">
        <stop offset="0" stopColor="#7c4a88" />
        <stop offset="1" stopColor="#c9a3cf" />
      </linearGradient>
      <linearGradient id="g-glass" x1="0" y1="0" x2="0" y2="1">
        <stop offset="0" stopColor="#5f7890" stopOpacity="0.550" />
        <stop offset="0.300" stopColor="#ffffff" stopOpacity="0" />
        <stop offset="1" stopColor="#ffffff" stopOpacity="0.450" />
      </linearGradient>
      <radialGradient id="g-blob">
        <stop offset="0" stopColor="#3f5f83" stopOpacity="0.700" />
        <stop offset="1" stopColor="#3f5f83" stopOpacity="0" />
      </radialGradient>
      <radialGradient id="g-orb" cx="0.500" cy="0.900" r="0.900">
        <stop offset="0" stopColor="#4fd0f0" />
        <stop offset="0.500" stopColor="#1f5f96" />
        <stop offset="1" stopColor="#a8c0d4" />
      </radialGradient>
    </defs>
  </svg>
);

export default function App() {
  return (
    <div className="min-h-screen bg-white">
      <Gradients />
      <div className="w-full max-w-[1280px] bg-[#1c2733] font-['Open_Sans','Noto_Sans',sans-serif] text-black">
        <BrowserStrip />
        <div className="overflow-hidden rounded-md border-t border-white bg-[#1c2733]">
          <TitleBar />
          <div className="border-x border-b border-b-[#1b7f9e] border-l-[#46586c] border-r-[#1d6f86] bg-linear-to-b from-[#dbe8f6] to-[#a9c8ea] pb-[6px] pl-[7px] pr-[6px]">
            <div className="border-y border-[#57708c] bg-[#f0f0f0]">
              <header className="bg-linear-to-b from-white to-[#ededed]">
                <div className="flex h-7 items-center pl-1.5 pr-2 text-[11px]">
                  <nav aria-label="Menü" className="flex gap-3 font-['Noto_Sans',sans-serif]">
                    {menus.map(([before, key, after]) => (
                      <button key={before + key + after} type="button">
                        {before}
                        <u className="underline-offset-2">{key}</u>
                        {after}
                      </button>
                    ))}
                  </nav>
                  <button type="button" aria-label="Dokument schließen" className="ml-auto text-[#222]">
                    <Cross className="size-[9px]" />
                  </button>
                </div>
                <div className="flex h-[38px] items-center border-b-2 border-[#a9aaa9]">
                  <Toolbar items={standardBar} label="Standard" />
                </div>
              </header>
              <div className="flex">
                <SlidePanel />
                <Splitter side="left" />
                <Workspace />
                <Splitter side="right" />
                <Sidebar />
              </div>
              <div className="flex h-[39px] items-center border-t border-[#a3a3a3]">
                <Toolbar items={drawingBar} label="Zeichnen" />
              </div>
              <StatusBar />
            </div>
          </div>
        </div>
        <Taskbar />
      </div>
    </div>
  );
}
